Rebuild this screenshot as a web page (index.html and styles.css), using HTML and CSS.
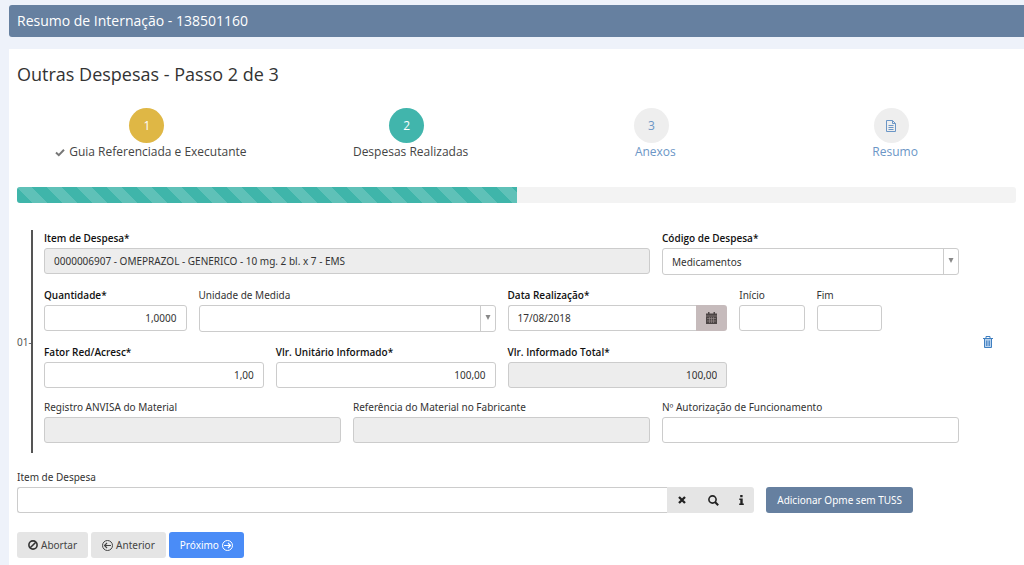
FILE: index.html
```html
<!DOCTYPE html>
<html lang="pt-BR">
<head>
<meta charset="utf-8">
<meta name="viewport" content="width=device-width, initial-scale=1">
<title>Resumo de Internação</title>
<link rel="stylesheet" href="styles.css">
</head>
<body>
<header class="page-header"><h1 class="page-title">Resumo de Internação - 138501160</h1></header>
<main class="panel">
  <h2 class="panel-title">Outras Despesas - Passo 2 de 3</h2>

  <nav class="steps" aria-label="Passos">
    <div class="step step-done">
      <span class="step-number">1</span>
      <span class="step-label"><svg class="step-check" width="10" height="9" viewBox="0 0 10 9" aria-hidden="true"><path d="M1 4.5 L3.8 7.2 L9 1.8" fill="none" stroke="#777" stroke-width="2"/></svg>Guia Referenciada e Executante</span>
    </div>
    <div class="step step-active">
      <span class="step-number">2</span>
      <span class="step-label">Despesas Realizadas</span>
    </div>
    <a class="step" href="#anexos">
      <span class="step-number">3</span>
      <span class="step-label">Anexos</span>
    </a>
    <a class="step" href="#resumo">
      <span class="step-number"><svg width="10" height="12" viewBox="0 0 10 12" fill="none" stroke="#6b96c6" aria-hidden="true"><path d="M.5 .5H6.5L9.5 3.5V11.5H.5Z M6.5 .5V3.5H9.5 M2.5 5.5H7.5 M2.5 7.5H7.5 M2.5 9.5H7.5"/></svg></span>
      <span class="step-label">Resumo</span>
    </a>
  </nav>

  <div class="progress" role="progressbar" aria-label="Progresso" aria-valuenow="50" aria-valuemin="0" aria-valuemax="100"><div class="progress-bar" style="width:50%"></div></div>

  <form class="form">
    <section class="expense">
      <span class="expense-index">01-</span>
      <div class="expense-fields">
        <div class="field span-8"><label class="label required" for="item">Item de Despesa*</label><input class="input" id="item" type="text" readonly value="0000006907 - OMEPRAZOL - GENERICO - 10 mg. 2 bl. x 7 - EMS"></div>
        <div class="field span-4"><label class="label required" for="codigo">Código de Despesa*</label>
          <div class="select-box"><select class="select" id="codigo"><option>Medicamentos</option></select><span class="select-arrow"><svg width="6" height="5" viewBox="0 0 6 5" aria-hidden="true"><path d="M.5 0H5.5L3 5Z" fill="#888"/></svg></span></div></div>

        <div class="field span-2"><label class="label required" for="qtd">Quantidade*</label><input class="input numeric" id="qtd" type="text" value="1,0000"></div>
        <div class="field span-4"><label class="label" for="unidade">Unidade de Medida</label>
          <div class="select-box"><select class="select" id="unidade"><option></option></select><span class="select-arrow"><svg width="6" height="5" viewBox="0 0 6 5" aria-hidden="true"><path d="M.5 0H5.5L3 5Z" fill="#888"/></svg></span></div></div>
        <div class="field span-3"><label class="label required" for="data">Data Realização*</label>
          <div class="group"><input class="input" id="data" type="text" value="17/08/2018"><button class="date-button" type="button" aria-label="Abrir calendário"><svg width="11" height="12" viewBox="0 0 11 12" aria-hidden="true"><path d="M0 1.5H2V0H3.5V1.5H7.5V0H9V1.5H11V12H0Z" fill="#4c4545"/><path d="M0 4H11 M1 6.5H10 M1 9H10 M3.5 5V11 M5.5 5V11 M7.5 5V11" stroke="#9b8f8f" stroke-width=".6"/></svg></button></div></div>
        <div class="field span-1"><label class="label" for="inicio">Início</label><input class="input" id="inicio" type="text"></div>
        <div class="field span-1"><label class="label" for="fim">Fim</label><input class="input" id="fim" type="text"></div>

        <div class="field span-3 row-start"><label class="label required" for="fator">Fator Red/Acresc*</label><input class="input numeric" id="fator" type="text" value="1,00"></div>
        <div class="field span-3"><label class="label required" for="unitario">Vlr. Unitário Informado*</label><input class="input numeric" id="unitario" type="text" value="100,00"></div>
        <div class="field span-3"><label class="label required" for="total">Vlr. Informado Total*</label><input class="input numeric" id="total" type="text" readonly value="100,00"></div>

        <div class="field span-4 row-start"><label class="label" for="anvisa">Registro ANVISA do Material</label><input class="input" id="anvisa" type="text" readonly></div>
        <div class="field span-4"><label class="label" for="referencia">Referência do Material no Fabricante</label><input class="input" id="referencia" type="text" readonly></div>
        <div class="field span-4"><label class="label" for="autorizacao">Nº Autorização de Funcionamento</label><input class="input" id="autorizacao" type="text"></div>
      </div>
      <div class="expense-actions"><button class="trash-button" type="button" aria-label="Excluir"><svg width="10" height="12" viewBox="0 0 10 12" fill="none" stroke="#3f7fc0" aria-hidden="true"><path d="M0 2.5H10 M3 2V.5H7V2"/><path d="M1.5 3V11.5H8.5V3" fill="#b9d3ee"/><path d="M3.5 4.5V10 M5 4.5V10 M6.5 4.5V10" stroke-width=".8"/></svg></button></div>
    </section>

    <section class="search">
      <div class="field search-field"><label class="label" for="busca">Item de Despesa</label>
        <div class="group"><input class="input" id="busca" type="text"><div class="tools">
          <button class="tool" type="button" aria-label="Limpar"><svg width="8" height="8" viewBox="0 0 8 8" aria-hidden="true"><path d="M1 1L7 7M7 1L1 7" stroke="#222" stroke-width="2.3"/></svg></button>
          <button class="tool tool-wide" type="button" aria-label="Pesquisar"><svg width="11" height="11" viewBox="0 0 11 11" fill="none" stroke="#222" aria-hidden="true"><circle cx="4.5" cy="4.5" r="3.6" stroke-width="1.6"/><path d="M7 7L10.2 10.2" stroke-width="2"/></svg></button>
          <button class="tool tool-narrow" type="button" aria-label="Informações"><svg width="5" height="10" viewBox="0 0 5 10" fill="#222" aria-hidden="true"><path d="M1.2 0H3.6V2.2H1.2ZM.3 3.4H3.7V8.4H4.8V10H.2V8.4H1.3V5H.3Z"/></svg></button>
        </div></div></div>
      <button class="button button-steel" type="button">Adicionar Opme sem TUSS</button>
    </section>

    <div class="actions">
      <button class="button" type="button"><svg width="10" height="10" viewBox="0 0 10 10" fill="none" stroke="#333" stroke-width="1.6" aria-hidden="true"><circle cx="5" cy="5" r="4.1"/><path d="M2.2 7.8L7.8 2.2"/></svg>Abortar</button>
      <button class="button" type="button"><svg width="11" height="11" viewBox="0 0 11 11" fill="none" stroke="#444" aria-hidden="true"><circle cx="5.5" cy="5.5" r="5"/><path d="M9 5.5H2.5M5 3L2.5 5.5L5 8" stroke-width="1.2"/></svg>Anterior</button>
      <button class="button button-primary" type="submit">Próximo<svg width="11" height="11" viewBox="0 0 11 11" fill="none" stroke="#fff" aria-hidden="true"><circle cx="5.5" cy="5.5" r="5"/><path d="M2 5.5H8.5M6 3L8.5 5.5L6 8" stroke-width="1.2"/></svg></button>
    </div>
  </form>
</main>
</body>
</html>
```
FILE: styles.css
```css
* { box-sizing: border-box; }
html { height: 100%; }
body {
  margin: 0;
  min-height: 100%;
  display: flex;
  flex-direction: column;
  padding: 5px 0 0 9px;
  background: #eef2fa;
  color: #333;
  font: 12px/18px "Open Sans", "Noto Sans", sans-serif;
}
h1, h2 { margin: 0; font-weight: 400; }
button, input, select { font: inherit; color: inherit; margin: 0; }
svg { flex: none; display: block; }

.page-header {
  padding: 6px 8px;
  margin-bottom: 12px;
  background: #6680a0;
  border-radius: 3px 0 0 3px;
  color: #fff;
}
.page-title { font-size: 14px; line-height: 20px; }

.panel { flex: 1; padding: 12px 8px 0; background: #fff; }
.panel-title { font-size: 18px; line-height: 26px; }

.steps {
  display: grid;
  grid-template-columns: 26fr 26fr 23fr 25fr;
  margin-top: 21px;
}
.step {
  display: flex;
  flex-direction: column;
  align-items: center;
  color: #6b96c6;
  text-decoration: none;
}
.step-number {
  display: flex;
  align-items: center;
  justify-content: center;
  width: 35px;
  height: 35px;
  border-radius: 50%;
  background: #eee;
}
.step-label { display: flex; align-items: center; gap: 4px; padding-left: 8px; }
.step-done, .step-active { color: #444; }
.step-done .step-number { background: #dfb745; color: #fff; }
.step-active .step-number { background: #41b5ac; color: #fff; }

.progress {
  height: 16px;
  margin-top: 26px;
  border-radius: 3px;
  background: #f3f3f3;
  overflow: hidden;
}
.progress-bar {
  height: 100%;
  background: #3fb5aa linear-gradient(45deg, rgba(255,255,255,.17) 25%, transparent 25%, transparent 50%, rgba(255,255,255,.17) 50%, rgba(255,255,255,.17) 75%, transparent 75%) 0 0 / 30px 30px;
}

.form { font: 10px/16px "Noto Sans", "Open Sans", sans-serif; }
.expense { display: flex; margin-top: 27px; }
.expense-index { align-self: center; width: 14px; color: #555; white-space: nowrap; }
.expense-fields {
  flex: 1;
  display: grid;
  grid-template-columns: repeat(12, minmax(0, 1fr));
  gap: 12px;
  align-items: start;
  padding: 0 0 11px 11px;
  border-left: 2px solid #555;
}
.expense-actions { display: flex; align-items: center; justify-content: center; width: 57px; }
.trash-button { padding: 0; border: 0; background: none; }

.field { display: flex; flex-direction: column; gap: 2px; min-width: 0; }
.span-1 { grid-column-end: span 1; }
.span-2 { grid-column-end: span 2; }
.span-3 { grid-column-end: span 3; }
.span-4 { grid-column-end: span 4; }
.span-8 { grid-column-end: span 8; }
.row-start { grid-column-start: 1; }

.required { color: #111; font-family: "Open Sans", "Noto Sans", sans-serif; font-weight: 600; }
.input {
  width: 100%;
  min-width: 0;
  height: 26px;
  margin-bottom: -1px;
  padding: 0 9px;
  border: 1px solid #ccc;
  border-radius: 3px;
  background: #fff;
}
.input:read-only { background: #ededed; }
.numeric { text-align: right; }

.select-box {
  display: flex;
  height: 27px;
  border: 1px solid #ccc;
  border-radius: 3px;
  background: #fff;
}
.select {
  flex: 1;
  min-width: 0;
  padding: 0 9px;
  border: 0;
  background: none;
  appearance: none;
}
.select-arrow {
  display: flex;
  justify-content: center;
  align-items: center;
  width: 15px;
  padding-bottom: 2px;
  border-left: 1px solid #ccc;
}

.group { display: flex; height: 26px; }
.group .input { flex: 1; border-right: 0; border-radius: 3px 0 0 3px; }
.date-button {
  display: flex;
  align-items: center;
  justify-content: center;
  width: 31px;
  padding: 0;
  border: 0;
  border-radius: 0 3px 3px 0;
  background: #c6bbbc;
}

.search {
  display: grid;
  grid-template-columns: 3fr 1fr;
  align-items: end;
  justify-items: start;
  margin-top: 16px;
}
.search-field { width: 100%; padding-right: 12px; }
.tools { display: flex; border-radius: 0 3px 3px 0; background: #e5e5e5; }
.tool {
  display: flex;
  align-items: center;
  justify-content: center;
  width: 30px;
  padding: 0;
  border: 0;
  background: none;
}
.tool-wide { width: 32px; }
.tool-narrow { width: 25px; }

.button {
  display: flex;
  align-items: center;
  gap: 3px;
  height: 26px;
  padding: 0 11px;
  border: 0;
  border-radius: 3px;
  background: #e5e5e5;
  color: #444;
}
.button-steel { background: #6680a0; color: #fff; }
.button-primary { background: #4a8cf7; color: #fff; }
.actions { display: flex; gap: 3px; margin-top: 19px; }
```
